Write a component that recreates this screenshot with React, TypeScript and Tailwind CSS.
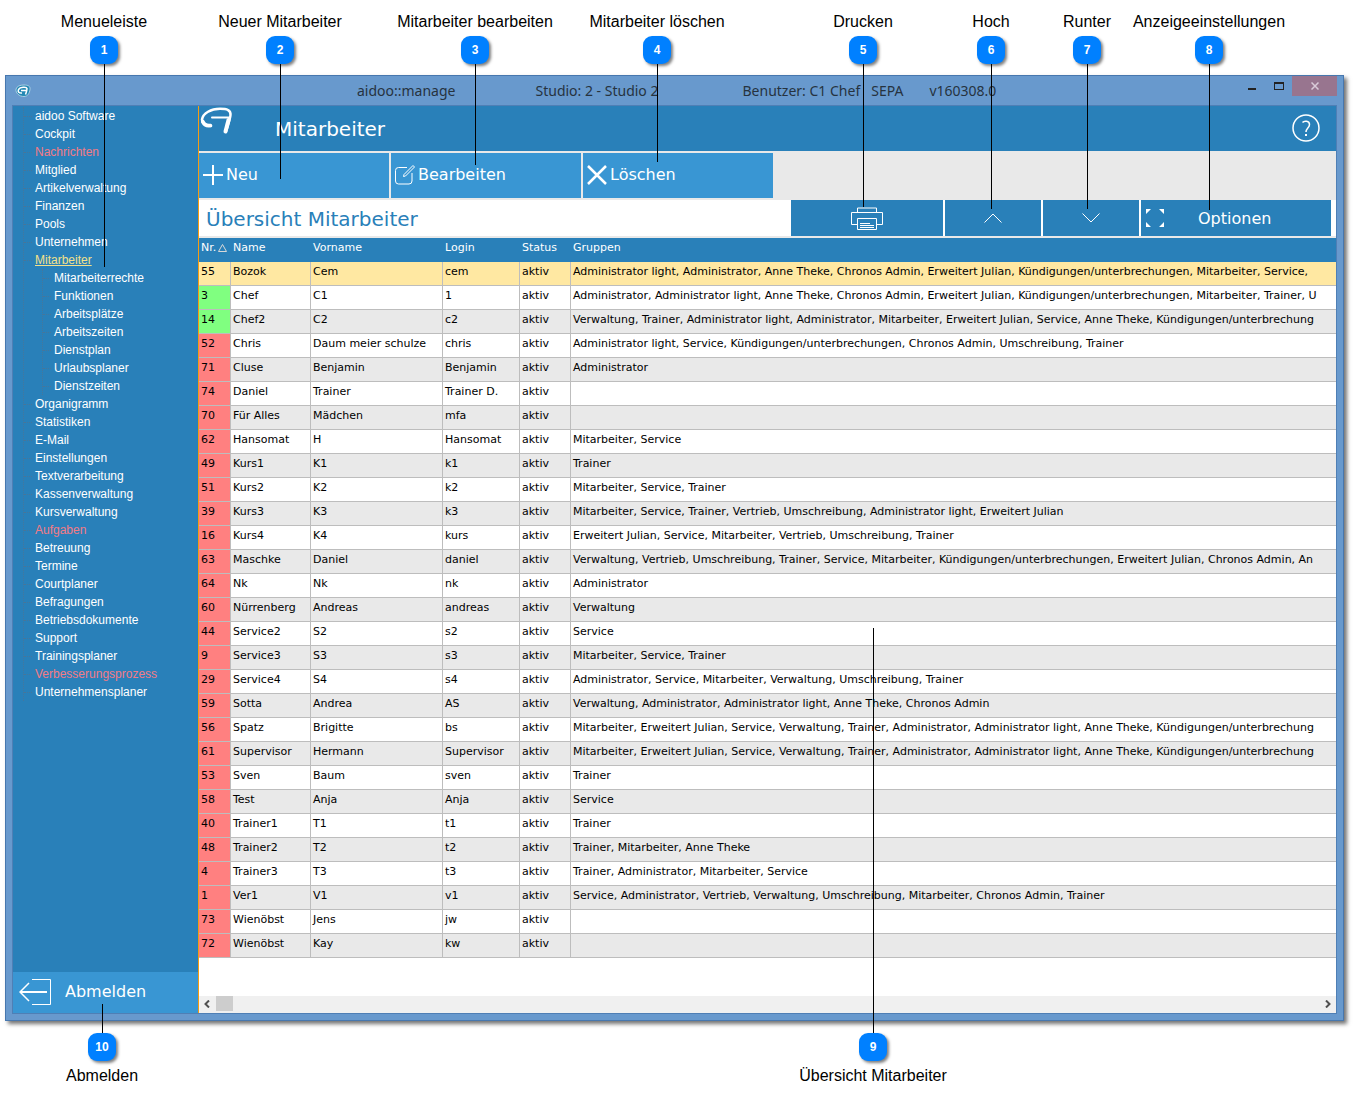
import type { ReactNode } from 'react'

const menu = [
  { label: 'aidoo Software' },
  { label: 'Cockpit' },
  { label: 'Nachrichten', alert: true },
  { label: 'Mitglied' },
  { label: 'Artikelverwaltung' },
  { label: 'Finanzen' },
  { label: 'Pools' },
  { label: 'Unternehmen' },
  {
    label: 'Mitarbeiter',
    active: true,
    children: ['Mitarbeiterrechte', 'Funktionen', 'Arbeitsplätze', 'Arbeitszeiten', 'Dienstplan', 'Urlaubsplaner', 'Dienstzeiten'],
  },
  { label: 'Organigramm' },
  { label: 'Statistiken' },
  { label: 'E-Mail' },
  { label: 'Einstellungen' },
  { label: 'Textverarbeitung' },
  { label: 'Kassenverwaltung' },
  { label: 'Kursverwaltung' },
  { label: 'Aufgaben', alert: true },
  { label: 'Betreuung' },
  { label: 'Termine' },
  { label: 'Courtplaner' },
  { label: 'Befragungen' },
  { label: 'Betriebsdokumente' },
  { label: 'Support' },
  { label: 'Trainingsplaner' },
  { label: 'Verbesserungsprozess', alert: true },
  { label: 'Unternehmensplaner' },
]

// nr, name, vorname, login, gruppen
const rows = [
  ['55', 'Bozok', 'Cem', 'cem', 'Administrator light, Administrator, Anne Theke, Chronos Admin, Erweitert Julian, Kündigungen/unterbrechungen, Mitarbeiter, Service,'],
  ['3', 'Chef', 'C1', '1', 'Administrator, Administrator light, Anne Theke, Chronos Admin, Erweitert Julian, Kündigungen/unterbrechungen, Mitarbeiter, Trainer, U'],
  ['14', 'Chef2', 'C2', 'c2', 'Verwaltung, Trainer, Administrator light, Administrator, Mitarbeiter, Erweitert Julian, Service, Anne Theke, Kündigungen/unterbrechung'],
  ['52', 'Chris', 'Daum meier schulze', 'chris', 'Administrator light, Service, Kündigungen/unterbrechungen, Chronos Admin, Umschreibung, Trainer'],
  ['71', 'Cluse', 'Benjamin', 'Benjamin', 'Administrator'],
  ['74', 'Daniel', 'Trainer', 'Trainer D.', ''],
  ['70', 'Für Alles', 'Mädchen', 'mfa', ''],
  ['62', 'Hansomat', 'H', 'Hansomat', 'Mitarbeiter, Service'],
  ['49', 'Kurs1', 'K1', 'k1', 'Trainer'],
  ['51', 'Kurs2', 'K2', 'k2', 'Mitarbeiter, Service, Trainer'],
  ['39', 'Kurs3', 'K3', 'k3', 'Mitarbeiter, Service, Trainer, Vertrieb, Umschreibung, Administrator light, Erweitert Julian'],
  ['16', 'Kurs4', 'K4', 'kurs', 'Erweitert Julian, Service, Mitarbeiter, Vertrieb, Umschreibung, Trainer'],
  ['63', 'Maschke', 'Daniel', 'daniel', 'Verwaltung, Vertrieb, Umschreibung, Trainer, Service, Mitarbeiter, Kündigungen/unterbrechungen, Erweitert Julian, Chronos Admin, An'],
  ['64', 'Nk', 'Nk', 'nk', 'Administrator'],
  ['60', 'Nürrenberg', 'Andreas', 'andreas', 'Verwaltung'],
  ['44', 'Service2', 'S2', 's2', 'Service'],
  ['9', 'Service3', 'S3', 's3', 'Mitarbeiter, Service, Trainer'],
  ['29', 'Service4', 'S4', 's4', 'Administrator, Service, Mitarbeiter, Verwaltung, Umschreibung, Trainer'],
  ['59', 'Sotta', 'Andrea', 'AS', 'Verwaltung, Administrator, Administrator light, Anne Theke, Chronos Admin'],
  ['56', 'Spatz', 'Brigitte', 'bs', 'Mitarbeiter, Erweitert Julian, Service, Verwaltung, Trainer, Administrator, Administrator light, Anne Theke, Kündigungen/unterbrechung'],
  ['61', 'Supervisor', 'Hermann', 'Supervisor', 'Mitarbeiter, Erweitert Julian, Service, Verwaltung, Trainer, Administrator, Administrator light, Anne Theke, Kündigungen/unterbrechung'],
  ['53', 'Sven', 'Baum', 'sven', 'Trainer'],
  ['58', 'Test', 'Anja', 'Anja', 'Service'],
  ['40', 'Trainer1', 'T1', 't1', 'Trainer'],
  ['48', 'Trainer2', 'T2', 't2', 'Trainer, Mitarbeiter, Anne Theke'],
  ['4', 'Trainer3', 'T3', 't3', 'Trainer, Administrator, Mitarbeiter, Service'],
  ['1', 'Ver1', 'V1', 'v1', 'Service, Administrator, Vertrieb, Verwaltung, Umschreibung, Mitarbeiter, Chronos Admin, Trainer'],
  ['73', 'Wienöbst', 'Jens', 'jw', ''],
  ['72', 'Wienöbst', 'Kay', 'kw', ''],
]

// numbered markers that point into the window; the right ones stick to the right edge
const markers = [
  { nr: 1, label: 'Menueleiste', place: 'left-[103px] top-3', line: 'h-[203px]' },
  { nr: 2, label: 'Neuer Mitarbeiter', place: 'left-[279px] top-3', line: 'h-[115px]' },
  { nr: 3, label: 'Mitarbeiter bearbeiten', place: 'left-[474px] top-3', line: 'h-[101px]' },
  { nr: 4, label: 'Mitarbeiter löschen', place: 'left-[656px] top-3', line: 'h-[98px]' },
  { nr: 5, label: 'Drucken', place: 'right-[489px] top-3', line: 'h-[143px]' },
  { nr: 6, label: 'Hoch', place: 'right-[361px] top-3', line: 'h-[145px]' },
  { nr: 7, label: 'Runter', place: 'right-[265px] top-3', line: 'h-[145px]' },
  { nr: 8, label: 'Anzeigeeinstellungen', place: 'right-[143px] top-3', line: 'h-[146px]' },
  { nr: 9, label: 'Übersicht Mitarbeiter', place: 'right-[479px] bottom-[15px]', line: 'h-[405px]', below: true },
  { nr: 10, label: 'Abmelden', place: 'left-[101px] bottom-[15px]', line: 'h-[29px]', below: true },
]

type MarkerProps = { nr: number; label: string; place: string; line: string; below?: boolean }

function Marker({ nr, label, place, line, below }: MarkerProps) {
  return (
    <div className={`pointer-events-none absolute z-10 flex w-[2px] items-center ${below ? 'flex-col-reverse' : 'flex-col'} ${place}`}>
      <span className="h-5 whitespace-nowrap text-base leading-5 text-black">{label}</span>
      <span className={`flex h-7 w-7 shrink-0 items-center justify-center rounded-[9px] bg-[#0080ff] text-xs font-bold text-white shadow-[2px_2px_3px_rgba(0,0,0,0.5)] ${below ? 'mb-[5px]' : 'mt-1'}`}>
        {nr}
      </span>
      <span className={`w-px shrink-0 self-end bg-black ${line}`} />
    </div>
  )
}

function Logo({ className }: { className: string }) {
  return (
    <svg viewBox="0 0 34 30" className={className} fill="none" stroke="currentColor" strokeLinecap="round">
      <path d="M11 20C5 20 1.800 17 2 13.500C3 7 11 2.800 20 2.800C27 2.800 31 4 30.500 9C30 14 28 19 26 25.500" strokeWidth="2.500" />
      <path d="M2.800 15.500C4 18.500 7 20 10.500 19.500" strokeWidth="3.500" />
      <path d="M28.500 14L25.500 25.500" strokeWidth="4" />
      <path d="M12 11.500H29" strokeWidth="2" />
    </svg>
  )
}

function ToolButton({ icon, children }: { icon: ReactNode; children: ReactNode }) {
  return (
    <button type="button" className="flex h-[45px] w-[190px] items-center gap-[3px] bg-[#3996d3] pb-[1px] pl-1 text-base text-white">
      {icon}
      {children}
    </button>
  )
}

function TitleBar() {
  return (
    <header className="flex h-[29px] items-center pl-[9px] pr-[6px] font-['Noto_Sans','Open_Sans',sans-serif] text-sm text-[#26333f]">
      <svg viewBox="0 0 16 14" className="h-[14px] w-4">
        <path d="M1 5C2 2 5 1 9 1C13 1 15.500 2 15 5.500C14.500 9 13 12.500 9 12.500C4 12.500 0.500 9 1 5Z" fill="#2488b4" stroke="#a9cfe4" />
        <path d="M7 9C4 9.500 2.500 7.500 3.500 5.500C5 3 11.500 2.500 12 4.500C12 6.500 11 9 10.500 10.500M6 6.500H11" fill="none" stroke="#fff" strokeWidth="1.500" />
      </svg>
      <span className="ml-[326px]">aidoo::manage</span>
      <span className="ml-20">Studio: 2 - Studio 2</span>
      <span className="ml-[84px]">Benutzer: C1 Chef</span>
      <span className="ml-[11px]">SEPA</span>
      <span className="ml-[26px]">v160308.0</span>
      <div className="ml-auto flex self-start">
        <button type="button" aria-label="Minimieren" className="flex h-5 w-7 items-center justify-center">
          <span className="mt-[5px] h-[2px] w-2 bg-[#222]" />
        </button>
        <button type="button" aria-label="Maximieren" className="flex h-5 w-[26px] items-center justify-center">
          <span className="h-2 w-[10px] border border-t-2 border-[#222]" />
        </button>
        <button type="button" aria-label="Schließen" className="flex h-5 w-[45px] items-center justify-center bg-[#98758f]">
          <svg viewBox="0 0 8 8" className="h-2 w-2" stroke="#d9cbd9" strokeWidth="1.500">
            <path d="M0.500 0.500L7.500 7.500M7.500 0.500L0.500 7.500" />
          </svg>
        </button>
      </div>
    </header>
  )
}

function Sidebar() {
  return (
    <aside className="flex w-[185px] shrink-0 flex-col bg-[#2980b9]">
      <ul className="ml-[10px] mt-[1px] border-l border-dotted border-[#47769a] text-xs leading-[18px] text-white">
        {menu.map((item) => (
          <li key={item.label}>
            <div className="flex items-center">
              <span className="mr-[3px] w-2 border-t border-dotted border-[#47769a]" />
              <a href="#" className={item.alert ? 'text-[#f27b86]' : item.active ? 'text-[#f3e08a] underline' : ''}>
                {item.label}
              </a>
            </div>
            {item.children && (
              <ul className="ml-[18px] border-l border-dotted border-[#47769a]">
                {item.children.map((child) => (
                  <li key={child} className="flex items-center">
                    <span className="mr-[3px] w-2 border-t border-dotted border-[#47769a]" />
                    <a href="#">{child}</a>
                  </li>
                ))}
              </ul>
            )}
          </li>
        ))}
      </ul>
      <button type="button" className="mt-auto flex h-[41px] items-center gap-[14px] bg-[#3996d3] pb-[1px] pl-[6px] font-['DejaVu_Sans',sans-serif] text-base text-white">
        <svg viewBox="0 0 32 26" className="h-[26px] w-8" fill="none" stroke="currentColor">
          <path d="M13 0.500H31.500V25.500H13" />
          <path d="M1 13H28" strokeWidth="2" />
          <path d="M10 4L1 13L10 22" strokeWidth="1.500" />
        </svg>
        Abmelden
      </button>
    </aside>
  )
}

function Toolbar() {
  return (
    <div className="flex gap-[2px] border-y-2 border-[#e9e9e9] bg-[#e9e9e9]">
      <ToolButton
        icon={
          <svg viewBox="0 0 20 20" className="h-5 w-5" stroke="currentColor" strokeWidth="2">
            <path d="M0 10H20M10 0V20" />
          </svg>
        }
      >
        Neu
      </ToolButton>
      <ToolButton
        icon={
          <svg viewBox="0 0 20 20" className="h-5 w-5" fill="none" stroke="currentColor">
            <path d="M12 2.500H3.500Q0.500 2.500 0.500 5.500V16Q0.500 19 3.500 19H14Q17 19 17 16V8" />
            <path d="M18 0.500L19.500 2L10.500 11L8.500 11.500L9 9.500Z" />
          </svg>
        }
      >
        Bearbeiten
      </ToolButton>
      <ToolButton
        icon={
          <svg viewBox="0 0 20 20" className="h-5 w-5" stroke="currentColor" strokeWidth="2.500">
            <path d="M1 1L19 19M19 1L1 19" />
          </svg>
        }
      >
        Löschen
      </ToolButton>
    </div>
  )
}

function OverviewBar() {
  return (
    <div className="flex h-[38px] gap-[2px] border-b-2 border-[#e9e9e9] bg-white pr-[5px] text-white">
      <h2 className="mr-auto pl-[7px] pt-[1px] text-xl leading-9 text-[#2980b9]">Übersicht Mitarbeiter</h2>
      <button type="button" aria-label="Drucken" className="flex w-[152px] items-center justify-center bg-[#2980b9] pt-[2px]">
        <svg viewBox="0 0 32 24" className="h-6 w-8" fill="none" stroke="currentColor">
          <path d="M6.500 5V1H25.500V5" />
          <path d="M6.500 17.500H0.500V5.500H31.500V17.500H25.500" />
          <path d="M6.500 11.500H25.500V22.500H6.500ZM9 16.500H19M9 18.500H23M9 20.500H23" />
        </svg>
      </button>
      <button type="button" aria-label="Hoch" className="flex w-24 items-center justify-center bg-[#2980b9]">
        <svg viewBox="0 0 18 10" className="h-[10px] w-[18px]" fill="none" stroke="currentColor">
          <path d="M0.500 9.500L9 1L17.500 9.500" />
        </svg>
      </button>
      <button type="button" aria-label="Runter" className="flex w-24 items-center justify-center bg-[#2980b9]">
        <svg viewBox="0 0 18 10" className="h-[10px] w-[18px]" fill="none" stroke="currentColor">
          <path d="M0.500 0.500L9 9L17.500 0.500" />
        </svg>
      </button>
      <button type="button" className="flex w-[190px] items-center bg-[#2980b9] pl-[5px] text-base">
        <svg viewBox="0 0 18 20" className="h-5 w-[18px]" fill="currentColor">
          <path d="M0 1H5L0 6ZM18 1V6L13 1ZM0 19V14L5 19ZM18 19H13L18 14Z" />
        </svg>
        <span className="ml-[34px] pt-[2px]">Optionen</span>
      </button>
    </div>
  )
}

function nrColor(i: number) {
  if (i === 0) return ''
  return i < 3 ? 'bg-[#80ff80]' : 'bg-[#ff8080]'
}

function rowColor(i: number) {
  if (i === 0) return 'bg-[#ffe8a2]'
  return i % 2 ? 'bg-white' : 'bg-[#e9e9e9]'
}

function StaffTable() {
  return (
    <table className="w-full table-fixed border-separate border-spacing-0 text-[11px] leading-[18px] text-black">
      <colgroup>
        <col className="w-8" />
        <col className="w-20" />
        <col className="w-[132px]" />
        <col className="w-[77px]" />
        <col className="w-[51px]" />
        <col />
      </colgroup>
      <thead>
        <tr className="h-6 bg-[#2980b9] text-left text-white [&>th]:whitespace-nowrap [&>th]:px-[2px] [&>th]:pb-1 [&>th]:font-normal">
          <th>
            <span className="flex items-center gap-[2px]">
              Nr.
              <svg viewBox="0 0 9 8" className="h-2 w-[9px]" fill="none" stroke="#d8d8d8">
                <path d="M4.500 0.500L8.500 7.500H0.500Z" />
              </svg>
            </span>
          </th>
          <th>Name</th>
          <th>Vorname</th>
          <th>Login</th>
          <th>Status</th>
          <th>Gruppen</th>
        </tr>
      </thead>
      <tbody>
        {rows.map(([nr, name, vorname, login, gruppen], i) => (
          <tr
            key={nr}
            className={`h-6 [&>td]:overflow-hidden [&>td]:whitespace-nowrap [&>td]:border-b [&>td]:border-r [&>td]:border-[#bdbdbd] [&>td]:px-[2px] [&>td]:pb-[3px] [&>td:last-child]:border-r-0 [&>td:last-child]:pr-0 ${rowColor(i)}`}
          >
            <td className={nrColor(i)}>{nr}</td>
            <td>{name}</td>
            <td>{vorname}</td>
            <td>{login}</td>
            <td>aktiv</td>
            <td>{gruppen}</td>
          </tr>
        ))}
      </tbody>
    </table>
  )
}

function ScrollBar() {
  return (
    <div className="mt-auto flex h-[17px] items-center bg-[#f0f0f0] px-[5px] pb-[2px] text-[#505050]">
      <svg viewBox="0 0 6 8" className="h-2 w-[6px]" fill="none" stroke="currentColor" strokeWidth="2">
        <path d="M5 0.500L1.500 4L5 7.500" />
      </svg>
      <span className="ml-[6px] h-[15px] w-[17px] bg-[#cdcdcd]" />
      <svg viewBox="0 0 6 8" className="ml-auto h-2 w-[6px]" fill="none" stroke="currentColor" strokeWidth="2">
        <path d="M1 0.500L4.500 4L1 7.500" />
      </svg>
    </div>
  )
}

export default function App() {
  return (
    <div className="relative bg-white pb-20 pl-[5px] pr-[9px] pt-[75px] font-['Liberation_Sans',Arial,sans-serif]">
      {markers.map((marker) => (
        <Marker key={marker.nr} {...marker} />
      ))}

      <div className="border border-[#4777ae] bg-[#6899cd] shadow-[3px_3px_4px_rgba(0,0,0,0.55)]">
        <TitleBar />
        <div className="mx-[6px] mb-[6px] flex border border-[#4f7fb5]">
          <Sidebar />
          <main className="flex min-w-0 flex-1 flex-col border-l border-[#f39c12] bg-white font-['DejaVu_Sans',Verdana,sans-serif]">
            <div className="flex h-[45px] bg-[#2980b9] pl-[1px] pr-4 text-white">
              <Logo className="h-[30px] w-[34px]" />
              <h1 className="ml-[41px] self-center text-xl">Mitarbeiter</h1>
              <button type="button" aria-label="Hilfe" className="ml-auto self-center pb-[2px]">
                <svg viewBox="0 0 28 28" className="h-7 w-7" fill="none" stroke="currentColor">
                  <circle cx="14" cy="14" r="13" strokeWidth="1.500" />
                  <path d="M10.500 8.500C12 6.500 17.500 6.500 17.500 10.500C17.500 14 14 14 14 18" strokeWidth="1.500" />
                  <path d="M14 20V22" strokeWidth="2" />
                </svg>
              </button>
            </div>
            <Toolbar />
            <OverviewBar />
            <StaffTable />
            <div className="h-[38px]" />
            <ScrollBar />
          </main>
        </div>
      </div>
    </div>
  )
}
